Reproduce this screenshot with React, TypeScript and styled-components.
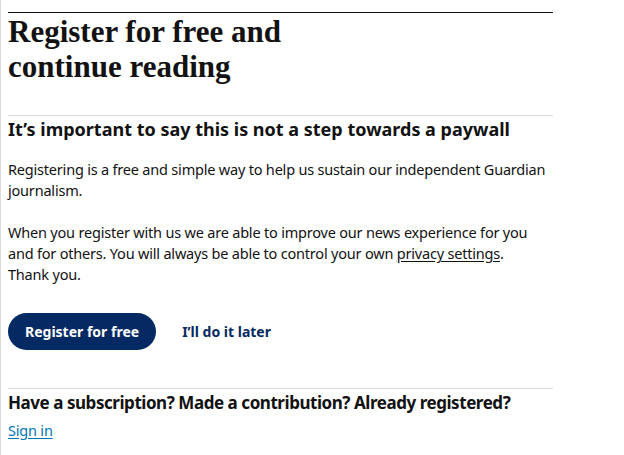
import React from "react";
import styled, { createGlobalStyle } from "styled-components";

const GlobalStyle = createGlobalStyle`
  body {
    margin: 0;
    background: #ffffff;
    font-family: "Noto Sans", "Open Sans", sans-serif;
    color: #121212;
  }
`;

const Page = styled.div`
  min-height: 455px;
  box-sizing: border-box;
  border-left: 1px solid #dcdcdc;
  padding: 12px 0 0 7px;
`;

const Panel = styled.section`
  width: 545px;
  border-top: 1px solid #121212;
`;

const Headline = styled.h1`
  margin: 0 0 31px;
  padding-top: 1px;
  font-family: "Liberation Serif", "Times New Roman", serif;
  font-weight: 700;
  font-size: 31px;
  line-height: 35px;
  color: #121212;
`;

const Section = styled.div`
  border-top: 1px solid #dcdcdc;
  padding-top: 2px;
`;

const SubHeading = styled.h2<{ size: number; tight?: boolean }>`
  margin: 0;
  font-weight: 700;
  font-size: ${(props) => props.size}px;
  line-height: ${(props) => props.size + 5}px;
  letter-spacing: ${(props) => (props.tight ? "-0.45px" : "0")};
`;

const Body = styled.div`
  max-width: 541px;
  margin-top: 18px;
`;

const Para = styled.p`
  margin: 0 0 21px;
  font-size: 14.5px;
  line-height: 21px;
  letter-spacing: -0.2px;
  &:last-child {
    margin-bottom: 0;
  }
`;

const InlineLink = styled.a`
  color: #121212;
  text-decoration: underline;
  text-underline-offset: 2px;
`;

const Actions = styled.div`
  display: flex;
  align-items: center;
  gap: 26px;
  margin: 28px 0 38px;
`;

const PrimaryButton = styled.button`
  height: 37px;
  padding: 0 17px;
  border: none;
  border-radius: 19px;
  background: #052962;
  color: #ffffff;
  font-family: inherit;
  font-weight: 700;
  font-size: 14px;
  cursor: pointer;
`;

const LaterButton = styled.button`
  padding: 0;
  border: none;
  background: none;
  color: #052962;
  font-family: inherit;
  font-weight: 700;
  font-size: 14px;
  cursor: pointer;
`;

const Footer = styled(Section)`
  padding-top: 3px;
`;

const SignIn = styled.a`
  display: inline-block;
  margin-top: 6px;
  font-size: 14.5px;
  line-height: 21px;
  letter-spacing: -0.2px;
  color: #0077b6;
  text-decoration: underline;
  text-underline-offset: 2px;
`;

export default function App() {
  return (
    <>
      <GlobalStyle />
      <Page>
        <Panel>
          <Headline>
            Register for free and
            <br />
            continue reading
          </Headline>
          <Section>
            <SubHeading size={18}>It’s important to say this is not a step towards a paywall</SubHeading>
            <Body>
              <Para>
                Registering is a free and simple way to help us sustain our independent Guardian journalism.
              </Para>
              <Para>
                When you register with us we are able to improve our news experience for you and for others. You
                will always be able to control your own <InlineLink href="#">privacy settings</InlineLink>.
                <br />
                Thank you.
              </Para>
            </Body>
            <Actions>
              <PrimaryButton>Register for free</PrimaryButton>
              <LaterButton>I’ll do it later</LaterButton>
            </Actions>
          </Section>
          <Footer>
            <SubHeading size={17} tight>
              Have a subscription? Made a contribution? Already registered?
            </SubHeading>
            <SignIn href="#">Sign in</SignIn>
          </Footer>
        </Panel>
      </Page>
    </>
  );
}
